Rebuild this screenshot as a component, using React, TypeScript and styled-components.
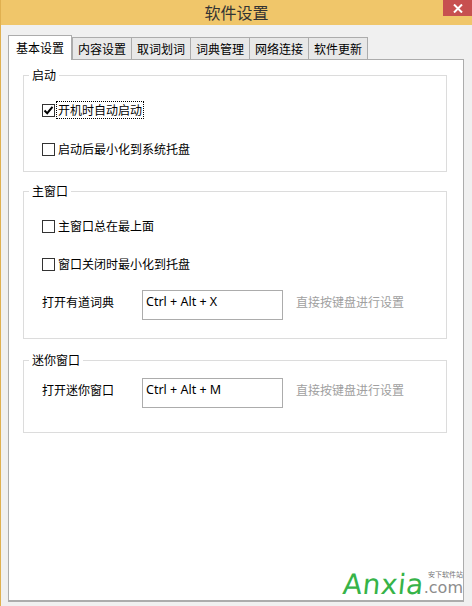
import React, { useState } from 'react'
import styled, { createGlobalStyle } from 'styled-components'

const GlobalStyle = createGlobalStyle`
    html, body {
        margin: 0;
        padding: 0;
        background: #f0f0f0;
    }
    body {
        font-family: "Noto Sans", "Noto Sans CJK SC", sans-serif;
        font-size: 12px;
        color: #000;
    }
`

const Window = styled.div`
    position: relative;
    width: 472px;
    height: 606px;
    box-sizing: border-box;
    border-left: 1px solid #e0b050;
    background: #f0f0f0;
    display: flex;
    flex-direction: column;
    overflow: hidden;
`

const TitleBar = styled.div`
    height: 25px;
    flex: none;
    background: #f0c66a;
    display: grid;
    grid-template-columns: 1fr auto 1fr;
    align-items: start;
`

const Title = styled.div`
    grid-column: 2;
    font-family: "Noto Sans CJK SC", sans-serif;
    font-size: 16px;
    line-height: 24px;
    color: #333;
`

const CloseButton = styled.div`
    grid-column: 3;
    justify-self: end;
    width: 29px;
    height: 16px;
    background: #c75050;
    display: flex;
    align-items: center;
    justify-content: center;
`

const Body = styled.div`
    flex: 1;
    display: flex;
    flex-direction: column;
    padding: 10px 8px 4px 7px;
    min-height: 0;
`

const TabStrip = styled.div`
    display: flex;
    align-items: flex-end;
    height: 24px;
    flex: none;
`

const Tab = styled.div<{ $active?: boolean }>`
    position: relative;
    box-sizing: border-box;
    border: 1px solid #acacac;
    border-bottom: none;
    font-family: "Noto Sans CJK SC", sans-serif;
    font-size: 12px;
    display: flex;
    align-items: center;
    height: ${p => (p.$active ? '25px' : '22px')};
    padding: ${p => (p.$active ? '0 7px 2px 7px' : '0 5px')};
    margin-bottom: ${p => (p.$active ? '-1px' : '0')};
    margin-left: ${p => (p.$active ? '0' : '-1px')};
    background: ${p => (p.$active ? '#fff' : '#e8e8e8')};
    z-index: ${p => (p.$active ? 2 : 1)};
    &:nth-child(2) {
        margin-left: 0;
    }
`

const Panel = styled.div`
    position: relative;
    flex: 1;
    background: #fff;
    border: 1px solid #acacac;
    border-bottom: 2px solid #acacac;
    padding: 7px 16px 0 14px;
    display: flex;
    flex-direction: column;
`

const Group = styled.fieldset<{ $gap?: number }>`
    margin: ${p => p.$gap || 0}px 0 0 0;
    padding: 0;
    border: 1px solid #dcdcdc;
    min-width: 0;
`

const Legend = styled.legend`
    margin-left: 5px;
    padding: 0 3px;
    font-family: "Noto Sans CJK SC", sans-serif;
    font-size: 12px;
    line-height: 16px;
`

const GroupBody = styled.div<{ $top: number; $bottom: number; $gap: number }>`
    display: flex;
    flex-direction: column;
    gap: ${p => p.$gap}px;
    padding: ${p => p.$top}px 12px ${p => p.$bottom}px 18px;
`

const CheckRow = styled.label`
    display: flex;
    align-items: center;
    height: 18px;
    font-family: "Noto Sans CJK SC", sans-serif;
    font-size: 12px;
    cursor: default;
`

const Box = styled.span`
    box-sizing: border-box;
    width: 13px;
    height: 13px;
    border: 1px solid #333;
    background: #fff;
    display: flex;
    align-items: center;
    justify-content: center;
    margin-right: 2px;
`

const CheckText = styled.span<{ $focus?: boolean }>`
    line-height: 16px;
    padding: 0 1px;
    outline: ${p => (p.$focus ? '1px dotted #000' : 'none')};
`

const HotkeyRow = styled.div<{ $lift?: number }>`
    display: flex;
    align-items: flex-start;
    margin-top: ${p => -(p.$lift || 0)}px;
    font-family: "Noto Sans CJK SC", sans-serif;
    font-size: 12px;
    line-height: 16px;
`

const HotkeyLabel = styled.span`
    width: 100px;
    padding-top: 4px;
`

const HotkeyInput = styled.div`
    box-sizing: border-box;
    width: 141px;
    height: 30px;
    border: 1px solid #acacac;
    padding: 3px 3px 0 3px;
    font-family: "Noto Sans", sans-serif;
    font-size: 12.5px;
    line-height: 16px;
    margin-right: 13px;
`

const Hint = styled.span`
    color: #a0a0a0;
    padding-top: 4px;
`

const Watermark = styled.div`
    position: absolute;
    right: 0;
    bottom: 1px;
    display: flex;
    align-items: flex-end;
    font-family: "DejaVu Sans", sans-serif;
`

const Brand = styled.span`
    color: #36b348;
    font-size: 28px;
    line-height: 28px;
    letter-spacing: 0.5px;
    transform: skewX(-6deg);
`

const Dotcom = styled.span`
    display: flex;
    flex-direction: column;
    align-items: flex-end;
    padding-bottom: 3px;
`

const Com = styled.span`
    color: #8c8c8c;
    font-size: 16px;
    line-height: 16px;
    height: 16px;
`

const SiteName = styled.span`
    font-family: "Noto Sans CJK SC", sans-serif;
    font-size: 7px;
    line-height: 8px;
    height: 8px;
    margin-bottom: 2px;
    color: #777;
`

const CheckMark = () => (
    <svg width="11" height="11" viewBox="0 0 11 11">
        <path d="M1.5 5.5 L4.2 8.2 L9.5 1.8" stroke="#000" strokeWidth="2" fill="none" />
    </svg>
)

const Check: React.FC<{ label: string; checked?: boolean; focus?: boolean }> = ({ label, checked, focus }) => {
    const [on, setOn] = useState(!!checked)
    return (
        <CheckRow onClick={() => setOn(!on)}>
            <Box>{on && <CheckMark />}</Box>
            <CheckText $focus={focus}>{label}</CheckText>
        </CheckRow>
    )
}

const Hotkey: React.FC<{ label: string; keys: string; lift?: number }> = ({ label, keys, lift }) => (
    <HotkeyRow $lift={lift}>
        <HotkeyLabel>{label}</HotkeyLabel>
        <HotkeyInput>{keys}</HotkeyInput>
        <Hint>直接按键盘进行设置</Hint>
    </HotkeyRow>
)

const tabs = ['基本设置', '内容设置', '取词划词', '词典管理', '网络连接', '软件更新']

export default function App() {
    const [active, setActive] = useState(0)
    return (
        <>
            <GlobalStyle />
            <Window>
                <TitleBar>
                    <Title>软件设置</Title>
                    <CloseButton>
                        <svg width="10" height="9" viewBox="0 0 10 9">
                            <path d="M1 0.5 L9 8.5 M9 0.5 L1 8.5" stroke="#fff" strokeWidth="2" />
                        </svg>
                    </CloseButton>
                </TitleBar>
                <Body>
                    <TabStrip>
                        {tabs.map((t, i) => (
                            <Tab key={t} $active={i === active} onClick={() => setActive(i)}>
                                {t}
                            </Tab>
                        ))}
                    </TabStrip>
                    <Panel>
                        <Group>
                            <Legend>启动</Legend>
                            <GroupBody $top={18} $bottom={13} $gap={21}>
                                <Check label="开机时自动启动" checked focus />
                                <Check label="启动后最小化到系统托盘" />
                            </GroupBody>
                        </Group>
                        <Group $gap={11}>
                            <Legend>主窗口</Legend>
                            <GroupBody $top={18} $bottom={18} $gap={20}>
                                <Check label="主窗口总在最上面" />
                                <Check label="窗口关闭时最小化到托盘" />
                                <Hotkey label="打开有道词典" keys="Ctrl + Alt + X" lift={3} />
                            </GroupBody>
                        </Group>
                        <Group $gap={13}>
                            <Legend>迷你窗口</Legend>
                            <GroupBody $top={10} $bottom={24} $gap={0}>
                                <Hotkey label="打开迷你窗口" keys="Ctrl + Alt + M" />
                            </GroupBody>
                        </Group>
                        <Watermark>
                            <Brand>Anxia</Brand>
                            <Dotcom>
                                <SiteName>安下软件站</SiteName>
                                <Com>.com</Com>
                            </Dotcom>
                        </Watermark>
                    </Panel>
                </Body>
            </Window>
        </>
    )
}
